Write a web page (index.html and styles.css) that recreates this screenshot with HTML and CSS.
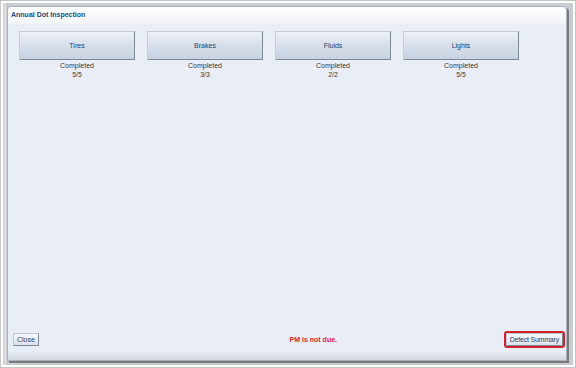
FILE: index.html
```html
<!DOCTYPE html>
<html lang="en">

<head>
    <meta charset="UTF-8">
    <title>Annual Dot Inspection</title>
    <link rel="stylesheet" href="styles.css">
</head>

<body>
    <div class="shot">
        <div class="backdrop">
            <div class="dialog">
                <div class="dialog-title">Annual Dot Inspection</div>

                <div class="dialog-body">
                    <!-- One tile per inspection section -->
                    <div class="sections">
                        <div class="section">
                            <button class="section-btn">Tires</button>
                            <div class="section-status">Completed<br>5/5</div>
                        </div>
                        <div class="section">
                            <button class="section-btn">Brakes</button>
                            <div class="section-status">Completed<br>3/3</div>
                        </div>
                        <div class="section">
                            <button class="section-btn">Fluids</button>
                            <div class="section-status">Completed<br>2/2</div>
                        </div>
                        <div class="section">
                            <button class="section-btn">Lights</button>
                            <div class="section-status">Completed<br>5/5</div>
                        </div>
                    </div>

                    <div class="footer">
                        <button class="small-btn">Close</button>
                        <span class="pm-note">PM is not due.</span>
                        <span class="highlight"><button class="small-btn">Defect Summary</button></span>
                    </div>
                </div>

                <div class="dialog-bottom"></div>
            </div>
        </div>
    </div>
</body>

</html>
```

FILE: styles.css
```css
html,
body {
    margin: 0;
    padding: 0;
    background: #ffffff;
}

.shot {
    width: 576px;
    height: 368px;
    box-sizing: border-box;
    border: 1px solid #c4c4c4;
    padding: 2px;
    background: #ffffff;
}

.backdrop {
    height: 100%;
    box-sizing: border-box;
    padding: 3px 6px 4px 4px;
    background: linear-gradient(to right, #c9ccd1 0, #e3e5e8 3px, #b4b8be 4px, #c9ccd1 5px);
}

.dialog {
    height: 100%;
    display: flex;
    flex-direction: column;
    box-sizing: border-box;
    border: 1px solid #a9b2bf;
    border-radius: 4px 4px 0 0;
    background: #e9edf5;
    box-shadow: 2px 2px 0 #7a7a7a;
    font-family: "Liberation Sans", Arial, sans-serif;
}

.dialog-title {
    height: 17px;
    padding: 4px 0 0 3px;
    box-sizing: border-box;
    font-size: 7px;
    font-weight: bold;
    color: #1d4a7a;
    background: linear-gradient(#ffffff, #f1f3f8);
    border-radius: 4px 4px 0 0;
}

.dialog-body {
    flex: 1;
    display: flex;
    flex-direction: column;
    justify-content: space-between;
    padding: 7px 1px 3px 4px;
}

.sections {
    display: flex;
    gap: 12px;
    padding-left: 7px;
}

.section {
    width: 116px;
    text-align: center;
}

.section-btn {
    display: block;
    width: 116px;
    height: 29px;
    padding: 0;
    border: 1px solid #c5ccd8;
    border-right-color: #7e8897;
    border-bottom-color: #7e8897;
    background: linear-gradient(#eef1f7, #d9e0ec 45%, #c8d2e2);
    font-family: "Liberation Sans", Arial, sans-serif;
    font-size: 7px;
    color: #21406b;
}

.section-status {
    margin-top: 1px;
    font-size: 7px;
    line-height: 9px;
    color: #3a3a3a;
}

.footer {
    display: flex;
    align-items: center;
    justify-content: space-between;
    padding-left: 1px;
}

.small-btn {
    height: 13px;
    padding: 0 3px;
    border: 1px solid #c0c7d2;
    border-right-color: #7e8897;
    border-bottom-color: #7e8897;
    background: linear-gradient(#f6f8fb, #dbe2ee);
    font-family: "Liberation Sans", Arial, sans-serif;
    font-size: 7px;
    color: #28466e;
}

.pm-note {
    font-size: 7px;
    font-weight: bold;
    color: #e8202a;
    margin-left: 84px;
}

/* red outline drawn round the summary button */
.highlight {
    display: inline-block;
    padding: 0;
    border: 2px solid #d0202a;
    border-radius: 3px;
    line-height: 0;
}

.highlight .small-btn {
    padding: 0 3px;
    letter-spacing: -0.2px;
}

.dialog-bottom {
    height: 9px;
    background: linear-gradient(#e9edf5, #d3d8e0);
}
```
